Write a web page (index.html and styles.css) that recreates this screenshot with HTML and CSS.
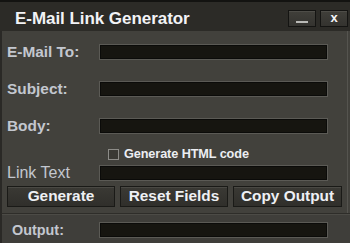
FILE: index.html
```html
<!DOCTYPE html>
<html>
<head>
<meta charset="utf-8">
<link rel="stylesheet" href="styles.css">
</head>
<body>
<div class="app">
  <div class="titlebar">
    <div class="title">E-Mail Link Generator</div>
    <div class="winbtns">
      <div class="winbtn min"><span class="minbar"></span></div>
      <div class="winbtn close">x</div>
    </div>
  </div>
  <div class="main">
    <div class="row r1"><div class="label">E-Mail To:</div><div class="field"></div></div>
    <div class="row r2"><div class="label">Subject:</div><div class="field"></div></div>
    <div class="row r3"><div class="label">Body:</div><div class="field"></div></div>
    <div class="checkrow"><span class="box"></span><span class="checktext">Generate HTML code</span></div>
    <div class="row r4"><div class="label plain">Link Text</div><div class="field"></div></div>
    <div class="buttons">
      <div class="btn">Generate</div>
      <div class="btn">Reset Fields</div>
      <div class="btn">Copy Output</div>
    </div>
  </div>
  <div class="footer">
    <div class="row"><div class="label out">Output:</div><div class="field"></div></div>
  </div>
</div>
</body>
</html>
```
FILE: styles.css
```css
* { box-sizing: border-box; }
html, body { margin: 0; padding: 0; background: #2c2b27; }
.app {
  width: 350px;
  height: 243px;
  font-family: "Liberation Sans", Arial, sans-serif;
  background: #42413c;
  overflow: hidden;
  display: flex;
  flex-direction: column;
}
.titlebar {
  height: 31px;
  border-top: 2px solid #131311;
  background: #2c2b27;
  padding: 4px 2px 0 15px;
  display: flex;
  align-items: center;
  justify-content: space-between;
}
.title {
  color: #f2f3f6;
  font-weight: bold;
  font-size: 17px;
  letter-spacing: -0.05px;
}
.winbtns { display: flex; gap: 4px; }
.winbtn {
  width: 28px;
  height: 17px;
  border: 1px solid #141412;
  background: linear-gradient(#403f3a, #34332f);
  box-shadow: inset 0 1px 0 #4e4d48;
  display: flex;
  align-items: center;
  justify-content: center;
  color: #f4f5f8;
  font-weight: bold;
  font-size: 13px;
  line-height: 1;
}
.min { align-items: flex-end; padding-bottom: 3px; }
.minbar { display: block; width: 12px; height: 2px; background: #b9b9b6; }
.close { padding-bottom: 2px; }
.main {
  flex: 0 0 auto;
  height: 182px;
  border-left: 2px solid #2a2926;
  border-right: 1px solid #55544f;
  margin-right: 2px;
  padding: 13px 0 0 5px;
  display: flex;
  flex-direction: column;
}
.row {
  height: 16px;
  display: flex;
  align-items: center;
}
.r2, .r3 { margin-top: 21px; }
.r4 { margin-top: 5px; }
.label {
  width: 92px;
  color: #c3c7cf;
  font-weight: bold;
  font-size: 15.4px;
  line-height: 16px;
}
.label.plain { font-weight: normal; font-size: 16px; }
.field {
  width: 229px;
  height: 16px;
  border: 1px solid #5b5a55;
  box-shadow: inset 0 0 0 1px #0b0b09;
  background: #161510;
}
.checkrow {
  margin-top: 14px;
  height: 12px;
  display: flex;
  align-items: center;
  padding-left: 101px;
}
.box {
  width: 11px;
  height: 11px;
  border: 1px solid #8d8c88;
  background: #3a3934;
  margin-right: 5px;
}
.checktext {
  color: #eceef2;
  font-weight: bold;
  font-size: 12.7px;
  letter-spacing: -0.1px;
}
.buttons {
  margin-top: 5px;
  display: grid;
  grid-template-columns: 108px 108px 109px;
  column-gap: 5px;
}
.btn {
  height: 21px;
  border: 1px solid #1a1a17;
  background: linear-gradient(#3a3934, #302f2b);
  box-shadow: inset 0 1px 0 #4a4944;
  color: #eef0f4;
  font-weight: bold;
  font-size: 15.4px;
  display: flex;
  align-items: center;
  justify-content: center;
  padding-bottom: 1px;
}
.footer {
  flex: 1;
  border-top: 1px solid #2e2d29;
  box-shadow: inset 0 1px 0 #4c4b46;
  border-left: 2px solid #2a2926;
  background: #3f3e3a;
  padding: 8px 0 0 10px;
}
.label.out { width: 87px; font-size: 14.4px; }
```
